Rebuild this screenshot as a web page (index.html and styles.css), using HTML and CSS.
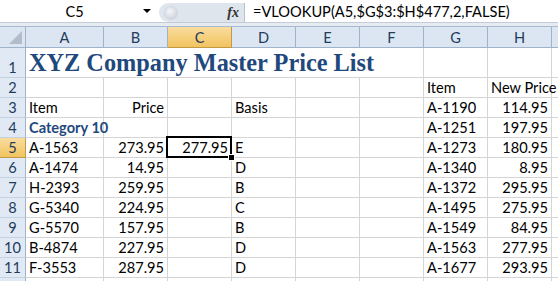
FILE: index.html
```html
<!DOCTYPE html>
<html lang="en">
<head>
  <meta charset="UTF-8">
  <meta name="viewport" content="width=device-width, initial-scale=1.0">
  <title>Price List</title>
  <link rel="stylesheet" href="styles.css">
</head>
<body>

  <div class="app">
    <div class="formula-bar">
      <div class="name-box"><span class="name">C5</span><span class="drop"></span></div>
      <div class="fx-box"><span class="knob"></span><span class="fx">fx</span></div>
      <div class="formula">=VLOOKUP(A5,$G$3:$H$477,2,FALSE)</div>
    </div>

    <div class="sheet">
      <!-- column headers -->
      <div class="corner"><span class="tri"></span></div>
      <div class="ch">A</div>
      <div class="ch">B</div>
      <div class="ch sel">C</div>
      <div class="ch">D</div>
      <div class="ch">E</div>
      <div class="ch">F</div>
      <div class="ch">G</div>
      <div class="ch">H</div>
      <div class="ch"></div>

      <!-- row 1 -->
      <div class="rh">1</div>
      <div class="c title">XYZ Company Master Price List</div>
      <div class="c"></div>
      <div class="c"></div>
      <div class="c"></div>

      <!-- row 2 -->
      <div class="rh">2</div>
      <div class="c"></div><div class="c"></div><div class="c"></div><div class="c"></div><div class="c"></div><div class="c"></div>
      <div class="c">Item</div>
      <div class="c">New Price</div>
      <div class="c"></div>

      <!-- row 3 -->
      <div class="rh">3</div>
      <div class="c">Item</div>
      <div class="c n">Price</div>
      <div class="c"></div>
      <div class="c">Basis</div>
      <div class="c"></div><div class="c"></div>
      <div class="c">A-1190</div>
      <div class="c n">114.95</div>
      <div class="c"></div>

      <!-- row 4 -->
      <div class="rh">4</div>
      <div class="c cat">Category 10</div>
      <div class="c"></div><div class="c"></div><div class="c"></div><div class="c"></div><div class="c"></div>
      <div class="c">A-1251</div>
      <div class="c n">197.95</div>
      <div class="c"></div>

      <!-- row 5 -->
      <div class="rh sel">5</div>
      <div class="c">A-1563</div>
      <div class="c n">273.95</div>
      <div class="c n active">277.95<span class="handle"></span></div>
      <div class="c">E</div>
      <div class="c"></div><div class="c"></div>
      <div class="c">A-1273</div>
      <div class="c n">180.95</div>
      <div class="c"></div>

      <!-- row 6 -->
      <div class="rh">6</div>
      <div class="c">A-1474</div>
      <div class="c n">14.95</div>
      <div class="c"></div>
      <div class="c">D</div>
      <div class="c"></div><div class="c"></div>
      <div class="c">A-1340</div>
      <div class="c n">8.95</div>
      <div class="c"></div>

      <!-- row 7 -->
      <div class="rh">7</div>
      <div class="c">H-2393</div>
      <div class="c n">259.95</div>
      <div class="c"></div>
      <div class="c">B</div>
      <div class="c"></div><div class="c"></div>
      <div class="c">A-1372</div>
      <div class="c n">295.95</div>
      <div class="c"></div>

      <!-- row 8 -->
      <div class="rh">8</div>
      <div class="c">G-5340</div>
      <div class="c n">224.95</div>
      <div class="c"></div>
      <div class="c">C</div>
      <div class="c"></div><div class="c"></div>
      <div class="c">A-1495</div>
      <div class="c n">275.95</div>
      <div class="c"></div>

      <!-- row 9 -->
      <div class="rh">9</div>
      <div class="c">G-5570</div>
      <div class="c n">157.95</div>
      <div class="c"></div>
      <div class="c">B</div>
      <div class="c"></div><div class="c"></div>
      <div class="c">A-1549</div>
      <div class="c n">84.95</div>
      <div class="c"></div>

      <!-- row 10 -->
      <div class="rh">10</div>
      <div class="c">B-4874</div>
      <div class="c n">227.95</div>
      <div class="c"></div>
      <div class="c">D</div>
      <div class="c"></div><div class="c"></div>
      <div class="c">A-1563</div>
      <div class="c n">277.95</div>
      <div class="c"></div>

      <!-- row 11 -->
      <div class="rh">11</div>
      <div class="c">F-3553</div>
      <div class="c n">287.95</div>
      <div class="c"></div>
      <div class="c">D</div>
      <div class="c"></div><div class="c"></div>
      <div class="c">A-1677</div>
      <div class="c n">293.95</div>
      <div class="c"></div>

      <!-- row 12, only its top edge shows -->
      <div class="rh"></div>
      <div class="c"></div><div class="c"></div><div class="c"></div><div class="c"></div><div class="c"></div><div class="c"></div><div class="c"></div><div class="c"></div><div class="c"></div>
    </div>
  </div>

</body>
</html>
```

FILE: styles.css
```css
body {
  margin: 0;
  font-family: Lato, "Liberation Sans", sans-serif;
  font-size: 14.6px;
  color: #000;
}

.app {
  width: 558px;
  height: 281px;
  overflow: hidden;
  background: #e6ebf1;
}

/* formula bar */

.formula-bar {
  display: flex;
  height: 22px;
  background: #fff;
  border-bottom: 1px solid #c3ccd8;
}

.name-box {
  width: 159px;
  display: flex;
  align-items: center;
}

.name {
  flex: 1;
  text-align: center;
  padding-left: 6px;
}

.drop {
  width: 0;
  height: 0;
  border-left: 4px solid transparent;
  border-right: 4px solid transparent;
  border-top: 4px solid #000;
  margin-right: 8px;
}

.fx-box {
  width: 85px;
  margin-top: 3px;
  display: flex;
  align-items: center;
  justify-content: space-between;
  background: #dfe5ed;
  border-radius: 10px 0 0 10px;
  border-right: 1px solid #b8c3d1;
}

.knob {
  width: 12px;
  height: 12px;
  margin-left: 5px;
  border-radius: 50%;
  background: radial-gradient(circle at 40% 35%, #f4f6f9, #c4ccd6);
  border: 1px solid #cfd6df;
}

.fx {
  font-family: "Liberation Serif", serif;
  font-style: italic;
  font-weight: bold;
  font-size: 14px;
  color: #333;
  margin-right: 5px;
}

.formula {
  flex: 1;
  padding-left: 8px;
  display: flex;
  align-items: center;
}

/* grid */

.sheet {
  margin-top: 3px;
  display: grid;
  grid-template-columns: 26px 78px repeat(7, 64px) 64px;
  grid-template-rows: 21px 30px repeat(11, 20px);
  background: #fff;
  border-top: 1px solid #a9bbd0;
}

.corner,
.ch {
  background: #dce6f2;
  border-right: 1px solid #9fb4cb;
  border-bottom: 1px solid #9fb4cb;
}

.corner {
  position: relative;
}

.tri {
  position: absolute;
  right: 3px;
  bottom: 3px;
  width: 0;
  height: 0;
  border-left: 13px solid transparent;
  border-bottom: 13px solid #b3bdc9;
}

.ch {
  display: flex;
  align-items: center;
  justify-content: center;
  color: #233c5c;
}

.rh {
  background: #e1e9f4;
  border-right: 1px solid #9fb4cb;
  border-bottom: 1px solid #c4d1e0;
  display: flex;
  align-items: flex-end;
  justify-content: center;
  color: #233c5c;
  padding-bottom: 1px;
}

.ch.sel,
.rh.sel {
  background: linear-gradient(#f9dc9e, #f2c45f);
  border-color: #c29a45;
}

.c {
  border-right: 1px solid #d4d4d4;
  border-bottom: 1px solid #d4d4d4;
  padding: 0 3px 1px;
  display: flex;
  align-items: flex-end;
  white-space: nowrap;
}

.n {
  justify-content: flex-end;
}

.cat {
  font-weight: bold;
  color: #1f497d;
}

.title {
  grid-column: span 6;
  font-family: "Liberation Serif", serif;
  font-weight: bold;
  font-size: 24.3px;
  color: #1f497d;
  padding-bottom: 0;
}

.active {
  position: relative;
}

.active::after {
  content: "";
  position: absolute;
  left: -2px;
  top: -2px;
  right: -1px;
  bottom: -1px;
  border: 2px solid #000;
}

.handle {
  position: absolute;
  right: -4px;
  bottom: -4px;
  width: 5px;
  height: 5px;
  background: #000;
  border: 1px solid #fff;
  z-index: 1;
}
```
